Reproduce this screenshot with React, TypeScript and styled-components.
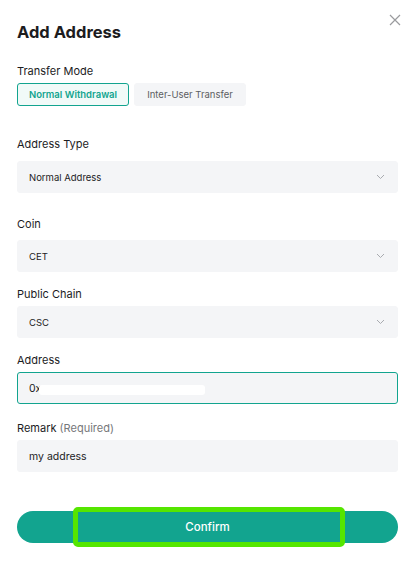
import styled, { createGlobalStyle } from 'styled-components';

/* Page reset */
const GlobalStyle = createGlobalStyle`
  html, body {
    margin: 0;
    padding: 0;
    background: #ffffff;
  }
  body {
    font-family: Inter, "Noto Sans", "Liberation Sans", sans-serif;
    color: #1c1c1e;
  }
  * {
    box-sizing: border-box;
  }
`;

const colors = {
  teal: '#12a48f',
  field: '#f4f5f7',
  text: '#1c1c1e',
  muted: '#76777a',
  highlight: '#55e600',
};

const Dialog = styled.div`
  position: relative;
  width: 417px;
  height: 565px;
  padding: 20px 19px 0 17px;
  background: #ffffff;
`;

const CloseButton = styled.button`
  position: absolute;
  top: 12px;
  right: 14px;
  width: 16px;
  height: 16px;
  padding: 0;
  border: none;
  background: none;
  display: flex;
  align-items: center;
  justify-content: center;
`;

const Title = styled.h1`
  margin: 0;
  font-size: 16.5px;
  font-weight: 700;
  line-height: 24px;
  color: ${colors.text};
`;

const Form = styled.div`
  display: flex;
  flex-direction: column;
  margin-top: 19px;
`;

const Field = styled.div<{ gap?: number }>`
  display: flex;
  flex-direction: column;
  margin-bottom: ${(p) => p.gap ?? 14}px;
`;

const Label = styled.div<{ space?: number }>`
  font-size: 11px;
  line-height: 16px;
  margin-bottom: ${(p) => p.space ?? 4}px;
  color: ${colors.text};
`;

const Hint = styled.span`
  color: ${colors.muted};
`;

const Tabs = styled.div`
  display: flex;
  gap: 5px;
`;

const Tab = styled.button<{ active?: boolean }>`
  height: 23px;
  width: 112px;
  padding: 0;
  border-radius: 3px;
  font-family: inherit;
  font-size: 9.5px;
  font-weight: ${(p) => (p.active ? 600 : 400)};
  color: ${(p) => (p.active ? colors.teal : '#5d5e62')};
  background: ${(p) => (p.active ? '#f1faf8' : colors.field)};
  border: 1px solid ${(p) => (p.active ? colors.teal : colors.field)};
`;

const Box = styled.div<{ focused?: boolean }>`
  position: relative;
  display: flex;
  align-items: center;
  justify-content: space-between;
  height: 32px;
  padding: 0 12px 0 11px;
  border-radius: 3px;
  background: ${colors.field};
  border: 1px solid ${(p) => (p.focused ? colors.teal : colors.field)};
  font-size: 9.5px;
  color: ${colors.text};
`;

const InputText = styled.span`
  font-size: 10.5px;
`;

const Redacted = styled.span`
  position: absolute;
  left: 21px;
  top: 12px;
  width: 166px;
  height: 10px;
  border-radius: 3px;
  background: #ffffff;
`;

const Footer = styled.div`
  margin-top: 39px;
  position: relative;
`;

const ConfirmButton = styled.button`
  width: 100%;
  height: 32px;
  border: none;
  border-radius: 16px;
  background: ${colors.teal};
  color: #ffffff;
  font-family: inherit;
  font-size: 11.5px;
  font-weight: 500;
`;

const Highlight = styled.div`
  position: absolute;
  left: 56px;
  top: -4px;
  width: 272px;
  height: 40px;
  border: 5px solid ${colors.highlight};
  border-radius: 5px;
  pointer-events: none;
`;

const Chevron = () => (
  <svg width="9" height="6" viewBox="0 0 9 6" fill="none">
    <path d="M1 1l3.5 3.5L8 1" stroke="#a9abb0" strokeWidth="1" />
  </svg>
);

const CloseIcon = () => (
  <svg width="12" height="12" viewBox="0 0 12 12" fill="none">
    <path d="M1 1l10 10M11 1L1 11" stroke="#9a9b9e" strokeWidth="1.2" />
  </svg>
);

const App = () => {
  return (
    <>
      <GlobalStyle />
      <Dialog>
        <CloseButton>
          <CloseIcon />
        </CloseButton>
        <Title>Add Address</Title>
        <Form>
          <Field gap={30}>
            <Label>Transfer Mode</Label>
            <Tabs>
              <Tab active>Normal Withdrawal</Tab>
              <Tab>Inter-User Transfer</Tab>
            </Tabs>
          </Field>
          <Field gap={23}>
            <Label space={9}>Address Type</Label>
            <Box>
              Normal Address
              <Chevron />
            </Box>
          </Field>
          <Field gap={14}>
            <Label space={8}>Coin</Label>
            <Box>
              CET
              <Chevron />
            </Box>
          </Field>
          <Field gap={14}>
            <Label>Public Chain</Label>
            <Box>
              CSC
              <Chevron />
            </Box>
          </Field>
          <Field gap={16}>
            <Label>Address</Label>
            <Box focused>
              <InputText>0x</InputText>
              <Redacted />
            </Box>
          </Field>
          <Field gap={0}>
            <Label>
              Remark <Hint>(Required)</Hint>
            </Label>
            <Box>
              <InputText>my address</InputText>
            </Box>
          </Field>
        </Form>
        <Footer>
          <ConfirmButton>Confirm</ConfirmButton>
          <Highlight />
        </Footer>
      </Dialog>
    </>
  );
};

export default App;
